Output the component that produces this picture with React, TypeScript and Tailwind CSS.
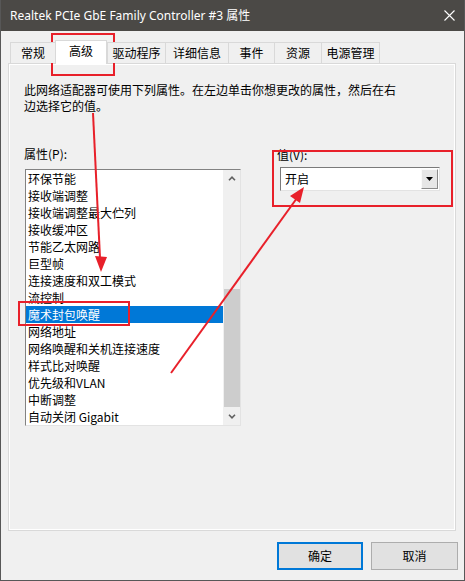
import React from "react";

const tabs: [string, number][] = [
  ["常规", 45],
  ["高级", 52],
  ["驱动程序", 58],
  ["详细信息", 63],
  ["事件", 46],
  ["资源", 47],
  ["电源管理", 59],
];

const items = [
  "环保节能",
  "接收端调整",
  "接收端调整最大伫列",
  "接收缓冲区",
  "节能乙太网路",
  "巨型帧",
  "连接速度和双工模式",
  "流控制",
  "魔术封包唤醒",
  "网络地址",
  "网络唤醒和关机连接速度",
  "样式比对唤醒",
  "优先级和VLAN",
  "中断调整",
  "自动关闭 Gigabit",
];

const Chevron = ({ down }: { down?: boolean }) => (
  <svg width="8" height="5" viewBox="0 0 8 5">
    <polyline
      points={down ? "1,0.8 4,3.8 7,0.8" : "1,4.2 4,1.2 7,4.2"}
      fill="none"
      stroke="#606060"
      strokeWidth="1.6"
    />
  </svg>
);

const Annotations = () => (
  <svg
    className="absolute inset-0 pointer-events-none"
    width="465"
    height="581"
    viewBox="0 0 465 581"
  >
    <g fill="none" stroke="#e8202a" strokeWidth="2">
      <rect x="51" y="34" width="62" height="41" />
      <rect x="18" y="302" width="110" height="23" />
      <rect x="272" y="151" width="179" height="55" />
      <line x1="92" y1="113" x2="99" y2="258" />
      <line x1="170" y1="373" x2="296" y2="198" />
    </g>
    <g fill="#e8202a">
      <polygon points="100,272 94,256 106,257" />
      <polygon points="303,187 299,203 289,196" />
    </g>
  </svg>
);

export default function App() {
  return (
    <div className="relative w-[465px] h-[581px] bg-[#f0f0f0] border-x border-b border-[#575757] flex flex-col text-[12px] text-black font-['Noto_Sans_CJK_SC','Noto_Sans',sans-serif]">
      {/* title bar */}
      <div className="h-[31px] bg-[#4b4946] flex items-center justify-between pl-[9px] pr-[9px] text-white">
        <span className="leading-[16px] font-['Noto_Sans','Noto_Sans_CJK_SC',sans-serif]">
          Realtek PCIe GbE Family Controller #3 <span className="font-['Noto_Sans_CJK_SC',sans-serif]">属性</span>
        </span>
        <svg width="11" height="11" viewBox="0 0 11 11">
          <path d="M0.5 0.5L10.5 10.5M10.5 0.5L0.5 10.5" stroke="#fff" strokeWidth="1.1" />
        </svg>
      </div>

      {/* tabs */}
      <div className="flex items-end h-[24px] mt-[9px] ml-[9px] -mb-px relative z-10">
        {tabs.map(([t, w]) =>
          t === "高级" ? (
            <div
              key={t}
              style={{ width: w }}
              className="h-[24px] bg-white border-x border-t border-[#d9d9d9] flex justify-center pt-[2px] leading-[16px]"
            >
              {t}
            </div>
          ) : (
            <div
              key={t}
              style={{ width: w }}
              className="h-[21px] mb-px bg-[#f0f0f0] border-l border-t border-[#d9d9d9] last:border-r flex items-center justify-center leading-[16px]"
            >
              {t}
            </div>
          )
        )}
      </div>

      {/* page */}
      <div className="ml-[7px] w-[448px] h-[468px] border border-[#d9d9d9] shadow-[inset_1px_1px_0_#fff,inset_-1px_-1px_0_#fff] pt-[18px] pl-[15px]">
        <div className="leading-[16px]">
          <div>此网络适配器可使用下列属性。在左边单击你想更改的属性，然后在右</div>
          <div>边选择它的值。</div>
        </div>

        <div className="flex mt-[32px]">
          <div className="flex flex-col">
            <div className="leading-[16px] h-[16px]">属性(P):</div>
            <div className="mt-[7px] ml-px w-[216px] h-[257px] border border-[#828282] border-r-[#e3e3e3] border-b-[#e3e3e3] flex">
              <div className="flex-1 bg-white">
                {items.map((it) => (
                  <div
                    key={it}
                    className={
                      "h-[17px] leading-[17px] pl-[2px] whitespace-nowrap " +
                      (it === "魔术封包唤醒" ? "bg-[#0078d7] text-white" : "")
                    }
                  >
                    {it}
                  </div>
                ))}
              </div>
              <div className="w-[17px] bg-[#f0f0f0] flex flex-col">
                <div className="h-[17px] flex items-center justify-center">
                  <Chevron />
                </div>
                <div className="flex-1 flex flex-col pt-[102px] pl-px">
                  <div className="h-[118px] bg-[#cdcdcd]" />
                </div>
                <div className="h-[17px] flex items-center justify-center">
                  <Chevron down />
                </div>
              </div>
            </div>
          </div>

          <div className="flex flex-col ml-[36px] pt-px">
            <div className="leading-[16px] h-[16px]">值(V):</div>
            <div className="mt-[4px] ml-[3px] w-[160px] h-[24px] border border-[#7a7a7a] border-r-[#e3e3e3] border-b-[#e3e3e3] bg-white flex items-center p-px">
              <div className="flex-1 pl-[3px] leading-[16px]">开启</div>
              <div className="w-[17px] h-full bg-[#e6e6e6] border border-[#fafafa] border-r-[#8a8a8a] border-b-[#8a8a8a] flex items-center justify-center">
                <svg width="7" height="4" viewBox="0 0 7 4">
                  <polygon points="0,0 7,0 3.5,4" fill="#000" />
                </svg>
              </div>
            </div>
          </div>
        </div>
      </div>

      {/* buttons */}
      <div className="flex justify-end gap-[8px] mt-[11px] pr-[6px]">
        <button className="w-[86px] h-[28px] border-2 border-[#0078d7] bg-[#e1e1e1] leading-[16px]">
          确定
        </button>
        <button className="w-[87px] h-[28px] border border-[#adadad] bg-[#e1e1e1] leading-[16px]">
          取消
        </button>
      </div>

      <Annotations />
    </div>
  );
}
